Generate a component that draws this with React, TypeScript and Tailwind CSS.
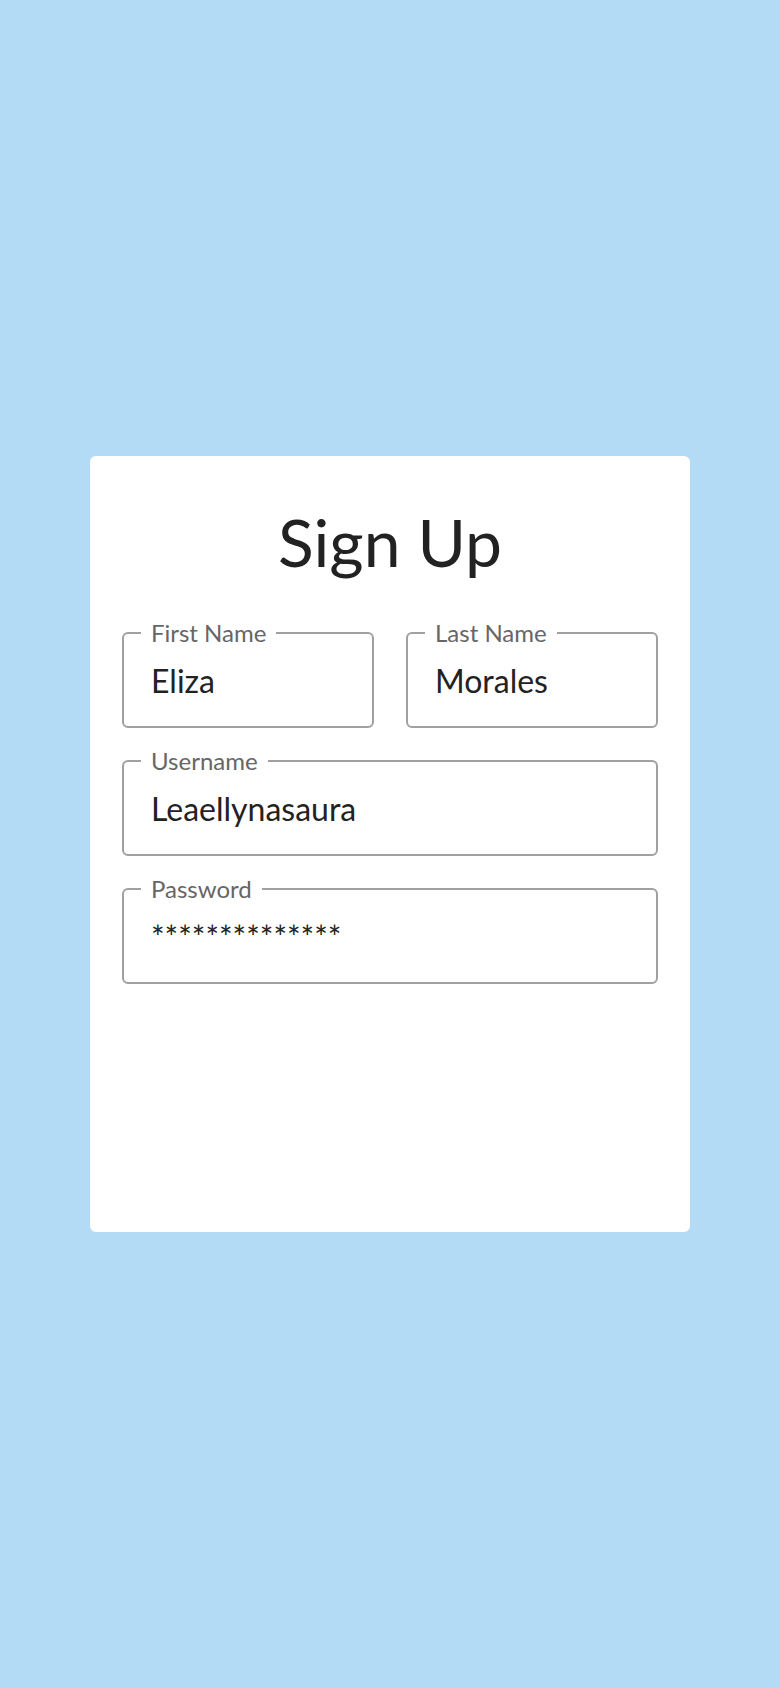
import type { ReactNode } from "react";

const FONT = "font-['Lato','Noto_Sans',sans-serif]";

// Outlined input look: the label sits in a notch of the top border.
function OutlinedField({ label, children }: { label: string; children: ReactNode }) {
  return (
    <fieldset className="min-w-0 rounded-[6px] border-2 border-[#a0a0a0]">
      <legend className="ml-[17px] px-[10px] text-[24px] leading-none text-[#666666]">
        {label}
      </legend>
      <div className="pl-[27px] pt-[17px] pb-[26px] text-[32px] leading-[38px] text-[#222222]">
        {children}
      </div>
    </fieldset>
  );
}

export default function App() {
  return (
    <div className={`flex min-h-screen items-center justify-center bg-[#b3dbf6] ${FONT}`}>
      <div className="h-[776px] w-[600px] rounded-md bg-white px-8 pt-[53px]">
        <h1 className="text-center text-[66px] font-normal leading-none text-[#222222]">
          Sign Up
        </h1>
        <form className="mt-[46px] flex flex-col gap-[21px]">
          <div className="grid grid-cols-2 gap-8">
            <OutlinedField label="First Name">Eliza</OutlinedField>
            <OutlinedField label="Last Name">Morales</OutlinedField>
          </div>
          <OutlinedField label="Username">Leaellynasaura</OutlinedField>
          <OutlinedField label="Password">**************</OutlinedField>
        </form>
      </div>
    </div>
  );
}
